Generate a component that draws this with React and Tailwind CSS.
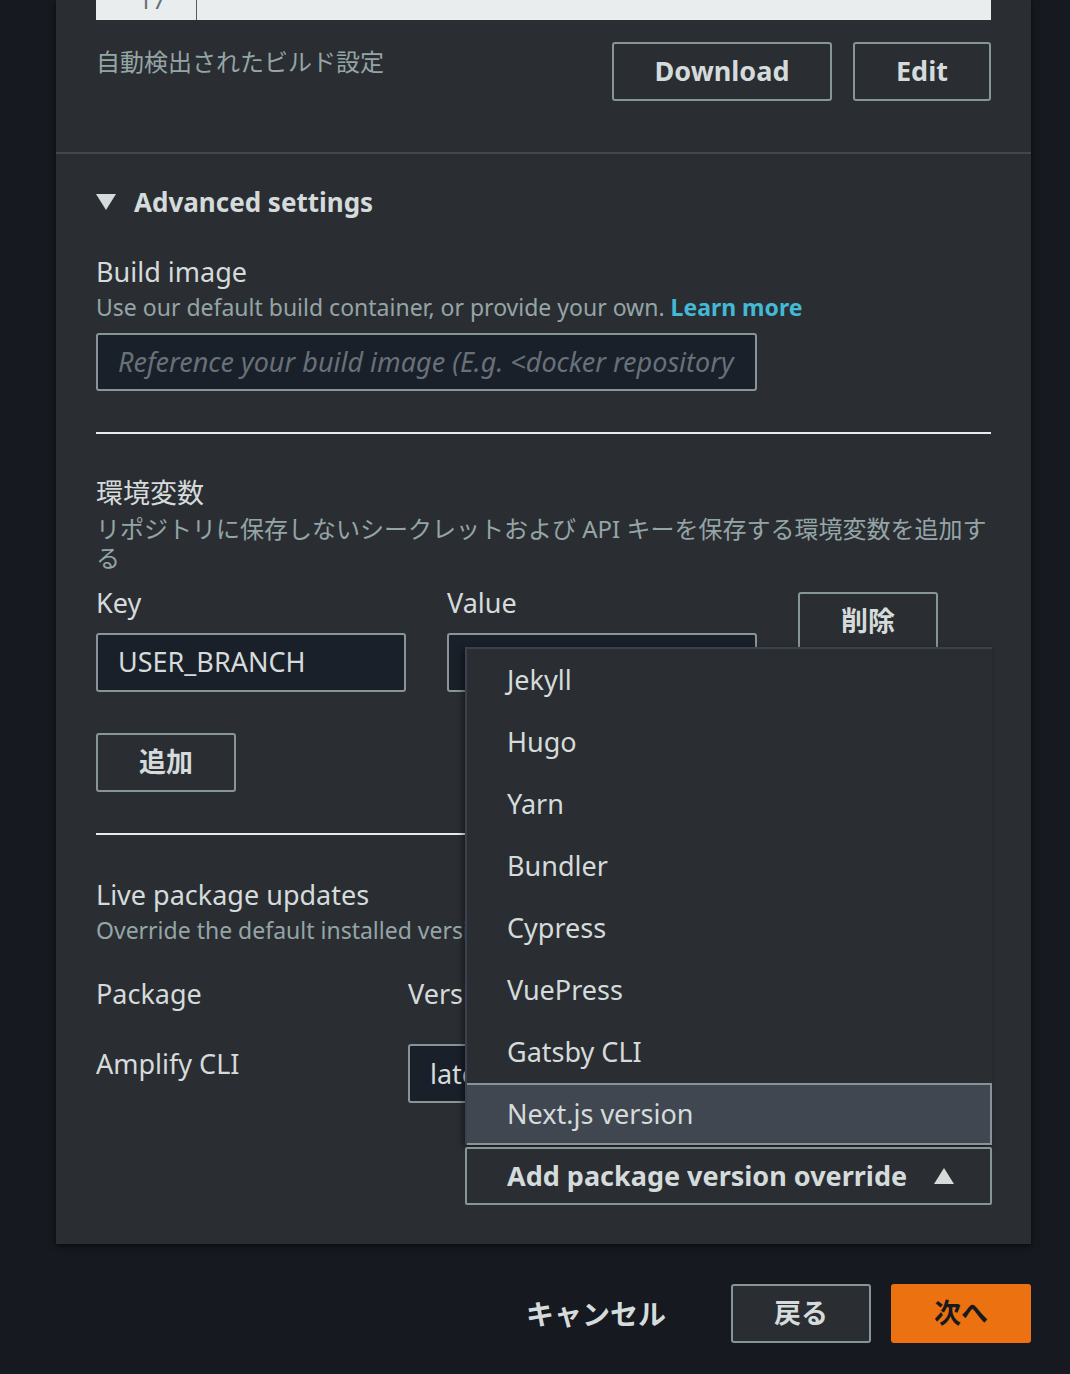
import React from "react";

const menuItems = ["Jekyll", "Hugo", "Yarn", "Bundler", "Cypress", "VuePress", "Gatsby CLI"];

const OutlineButton = ({ children, className = "" }) => (
  <button
    className={`h-[59px] rounded-[3px] border-2 border-[#879596] bg-[#2a2e33] text-[27px] font-bold text-[#d5dbdb] ${className}`}
  >
    {children}
  </button>
);

const App = () => {
  return (
    <div
      className="min-h-screen bg-[#16191f] pb-[30px] text-[#d5dbdb]"
      style={{ fontFamily: '"Noto Sans", "Noto Sans CJK JP", sans-serif' }}
    >
      <div className="ml-[56px] w-[975px] bg-[#2a2e33] shadow-[0_2px_6px_rgba(0,0,0,0.6)]">
        {/* build settings preview */}
        <div className="px-10 pb-[51px]">
          <div className="flex h-[20px] overflow-hidden bg-[#e9edee]">
            <div className="w-[101px] border-r border-[#545b64] pr-[30px] text-right text-[24px] leading-[24px] text-[#687078] -mt-[12px]">
              17
            </div>
          </div>
          <div className="mt-[22px] flex items-start">
            <div className="flex-1 pt-[3px] text-[24px] leading-[34px] text-[#95a5a6]">自動検出されたビルド設定</div>
            <OutlineButton className="w-[220px]">Download</OutlineButton>
            <OutlineButton className="ml-[21px] w-[138px]">Edit</OutlineButton>
          </div>
        </div>
        <div className="h-[2px] bg-[#414750]" />

        {/* advanced settings */}
        <div className="relative px-10 pt-[31px] pb-[141px]">
          <div className="flex items-center text-[26px] font-bold leading-[34px]">
            <svg width="20" height="16" viewBox="0 0 20 16" className="mr-[18px]">
              <path d="M0 0 H20 L10 16 Z" fill="#d5dbdb" />
            </svg>
            Advanced settings
          </div>

          <div className="mt-[35px] text-[27px] leading-[36px]">Build image</div>
          <div className="text-[23px] leading-[34px] text-[#95a5a6]">
            Use our default build container, or provide your own.{" "}
            <span className="font-bold text-[#44b9d6]">Learn more</span>
          </div>
          <div className="mt-[9px] flex h-[58px] w-[661px] items-center rounded-[3px] border-2 border-[#879596] bg-[#1a2029] px-[20px] text-[27px] italic text-[#687078]">
            <div className="overflow-hidden whitespace-nowrap">
              Reference your build image (E.g. &lt;docker repository&gt;)
            </div>
          </div>

          <div className="mt-[41px] h-[2px] bg-[#e9ebed]" />

          <div className="mt-[41px] text-[27px] leading-[36px]">環境変数</div>
          <div className="mt-[3px] text-[24px] leading-[29px] text-[#95a5a6]">
            リポジトリに保存しないシークレットおよび API キーを保存する環境変数を追加する
          </div>

          <div className="mt-[13px] grid grid-cols-[310px_310px_140px] gap-x-[41px]">
            <div>
              <div className="text-[27px] leading-[36px]">Key</div>
              <div className="mt-[12px] flex h-[59px] items-center rounded-[3px] border-2 border-[#879596] bg-[#1a2029] px-[20px] text-[27px]">
                USER_BRANCH
              </div>
            </div>
            <div>
              <div className="text-[27px] leading-[36px]">Value</div>
              <div className="mt-[12px] h-[59px] rounded-[3px] border-2 border-[#879596] bg-[#1a2029]" />
            </div>
            <div className="pt-[7px]">
              <OutlineButton className="w-[140px]">削除</OutlineButton>
            </div>
          </div>

          <OutlineButton className="mt-[41px] w-[140px]">追加</OutlineButton>

          <div className="mt-[41px] h-[2px] bg-[#e9ebed]" />

          <div className="mt-[42px] text-[27px] leading-[36px]">Live package updates</div>
          <div className="text-[23px] leading-[34px] text-[#95a5a6]">
            Override the default installed version of a package or tool
          </div>

          <div className="mt-[29px] grid grid-cols-[312px_1fr] text-[27px] leading-[36px]">
            <div>Package</div>
            <div>Version</div>
            <div className="mt-[34px]">Amplify CLI</div>
            <div className="mt-[32px] flex h-[59px] w-[300px] items-center rounded-[3px] border-2 border-[#879596] bg-[#1a2029] px-[20px]">
              latest
            </div>
          </div>

          {/* package menu */}
          <div className="absolute left-[409px] top-[493px] w-[527px]">
            <div className="border-t-2 border-l-2 border-[#3c424b] bg-[#2a2e33] shadow-[-2px_2px_6px_rgba(0,0,0,0.45)]">
              {menuItems.map((item) => (
                <div key={item} className="flex h-[62px] items-center pl-[40px] text-[27px]">
                  {item}
                </div>
              ))}
              <div className="flex h-[62px] items-center border-y-2 border-r-2 border-[#879596] bg-[#414750] pl-[40px] text-[27px]">
                Next.js version
              </div>
            </div>
            <div className="mt-[2px] flex h-[58px] items-center justify-between rounded-[2px] border-2 border-[#879596] bg-[#2a2e33] pl-[40px] pr-[36px] text-[27px] font-bold">
              Add package version override
              <svg width="20" height="16" viewBox="0 0 20 16">
                <path d="M10 0 L20 16 H0 Z" fill="#d5dbdb" />
              </svg>
            </div>
          </div>
        </div>
      </div>

      {/* footer */}
      <div className="mt-[40px] flex w-[1031px] items-center justify-end">
        <button className="mr-[65px] text-[28px] font-bold text-[#d5dbdb]">キャンセル</button>
        <OutlineButton className="w-[140px] !bg-[#2a2e33]">戻る</OutlineButton>
        <button className="ml-[20px] h-[59px] w-[140px] rounded-[3px] bg-[#ec7211] text-[27px] font-bold text-[#16191f]">
          次へ
        </button>
      </div>
    </div>
  );
};

export default App;
